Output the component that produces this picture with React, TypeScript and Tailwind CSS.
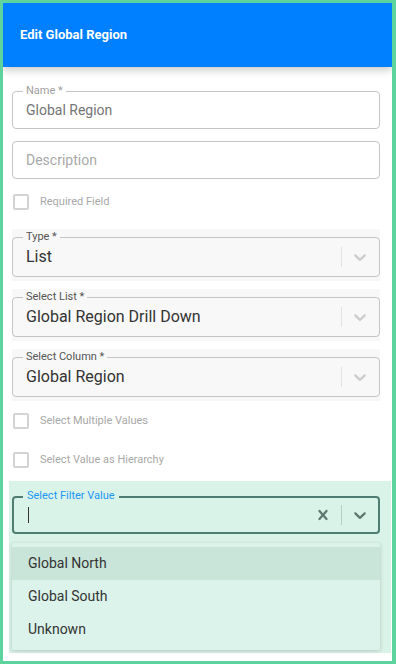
import React from "react";

const font = { fontFamily: "Roboto, 'Liberation Sans', Arial, sans-serif" };

function Chevron({ color }: { color: string }) {
  return (
    <svg width="20" height="20" viewBox="0 0 20 20" fill={color}>
      <path d="M4.516 7.548c0.436-0.446 1.043-0.481 1.576 0l3.908 3.747 3.908-3.747c0.533-0.481 1.141-0.446 1.574 0 0.436 0.445 0.408 1.197 0 1.615-0.406 0.418-4.695 4.502-4.695 4.502-0.217 0.223-0.502 0.335-0.787 0.335s-0.57-0.112-0.789-0.335c0 0-4.287-4.084-4.695-4.502s-0.436-1.17 0-1.615z" />
    </svg>
  );
}

function Cross({ color }: { color: string }) {
  return (
    <svg width="20" height="20" viewBox="0 0 20 20" fill={color}>
      <path d="M14.348 14.849c-0.469 0.469-1.229 0.469-1.697 0l-2.651-3.030-2.651 3.029c-0.469 0.469-1.229 0.469-1.697 0-0.469-0.469-0.469-1.229 0-1.697l2.758-3.15-2.759-3.152c-0.469-0.469-0.469-1.228 0-1.697s1.228-0.469 1.697 0l2.652 3.031 2.651-3.031c0.469-0.469 1.228-0.469 1.697 0s0.469 1.229 0 1.697l-2.758 3.152 2.758 3.15c0.469 0.469 0.469 1.229 0 1.698z" />
    </svg>
  );
}

function TextField({ label, value, placeholder }: { label?: string; value?: string; placeholder?: string }) {
  return (
    <div className="relative h-[38px] rounded-[4px] border border-[#c4c4c4] bg-white flex items-center px-[13px]">
      {label && (
        <span className="absolute left-[10px] -top-[7px] bg-white px-[3px] text-[11px] leading-[12px] text-[#a0a0a0]">
          {label}
        </span>
      )}
      {value ? (
        <span className="text-[14px] text-[#757575]">{value}</span>
      ) : (
        <span className="text-[14px] text-[#a9a9a9]">{placeholder}</span>
      )}
    </div>
  );
}

function SelectField({ label, value }: { label: string; value: string }) {
  return (
    <div className="bg-[#f8f8f8] pt-[8px] pb-[4px]">
      <div className="relative h-[40px] rounded-[4px] border border-[#c4c4c4] bg-[#f8f8f8] flex items-center">
        <span className="absolute left-[10px] -top-[7px] bg-[#f8f8f8] px-[3px] text-[11px] leading-[12px] text-[#555]">
          {label}
        </span>
        <span className="flex-1 pl-[13px] text-[16px] text-[#333]">{value}</span>
        <div className="w-px h-[20px] bg-[#e2e2e2]" />
        <div className="p-[8px] pr-[9px]">
          <Chevron color="#cccccc" />
        </div>
      </div>
    </div>
  );
}

function Check({ label }: { label: string }) {
  return (
    <div className="flex items-center h-[16px]">
      <div className="w-[16px] h-[16px] ml-[1px] rounded-[2px] border-2 border-[#d3d3d3] bg-white" />
      <span className="ml-[11px] text-[11px] text-[#a8a8a8]">{label}</span>
    </div>
  );
}

export default function App() {
  return (
    <div
      style={font}
      className="w-[396px] h-[664px] border-t-[3px] border-l-[3px] border-r-[4px] border-b-[3px] border-[#5dd39e] bg-white flex flex-col overflow-hidden"
    >
      <div className="relative z-10 h-[64px] bg-[#007fff] flex items-center pl-[17px] shadow-[0_3px_8px_rgba(0,0,0,0.22)]">
        <span className="text-[13px] font-bold text-white">Edit Global Region</span>
      </div>

      <div className="flex flex-col pl-[9px] pr-[12px] pt-[24px]">
        <TextField label="Name *" value="Global Region" />
        <div className="mt-[12px]">
          <TextField placeholder="Description" />
        </div>
        <div className="mt-[15px]">
          <Check label="Required Field" />
        </div>

        <div className="mt-[19px] flex flex-col gap-[8px]">
          <SelectField label="Type *" value="List" />
          <SelectField label="Select List *" value="Global Region Drill Down" />
          <SelectField label="Select Column *" value="Global Region" />
        </div>

        <div className="mt-[12px]">
          <Check label="Select Multiple Values" />
        </div>
        <div className="mt-[23px]">
          <Check label="Select Value as Hierarchy" />
        </div>

        <div className="mt-[13px] ml-[-3px] mr-[-11px] bg-[#daf3e9] pt-[15px] pb-[3px] pl-[3px] pr-[11px]">
          <div className="relative h-[38px] rounded-[4px] border-2 border-[#4f7d72] flex items-center">
            <span className="absolute left-[9px] -top-[8px] bg-[#daf3e9] px-[4px] text-[11px] leading-[12px] text-[#2196f3]">
              Select Filter Value
            </span>
            <div className="flex-1 pl-[14px]">
              <div className="w-px h-[16px] bg-[#333]" />
            </div>
            <div className="p-[8px]">
              <Cross color="#5f7a72" />
            </div>
            <div className="w-px h-[20px] bg-[#b5cdc4]" />
            <div className="p-[8px]">
              <Chevron color="#5f7a72" />
            </div>
          </div>

          <div className="mt-[9px] bg-[#dbf3ea] py-[4px] rounded-[2px] shadow-[0_1px_4px_rgba(0,0,0,0.18)]">
            <div className="h-[33px] flex items-center pl-[16px] bg-[#c9e5d9] text-[14px] text-[#333]">Global North</div>
            <div className="h-[33px] flex items-center pl-[16px] text-[14px] text-[#333]">Global South</div>
            <div className="h-[33px] flex items-center pl-[16px] text-[14px] text-[#333]">Unknown</div>
          </div>
        </div>
      </div>
    </div>
  );
}
